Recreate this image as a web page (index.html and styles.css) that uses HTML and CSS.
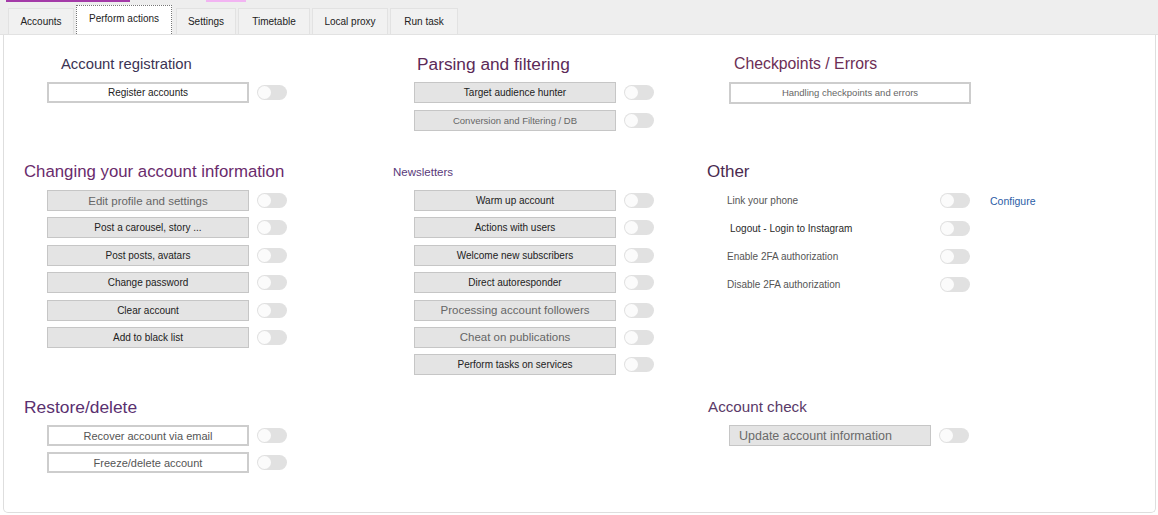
FILE: index.html
```html
<!DOCTYPE html>
<html>
<head>
<meta charset="utf-8">
<link rel="stylesheet" href="styles.css">
</head>
<body>
<div class="app">
  <header class="topbar">
    <div class="marks"><span class="mark mark-a"></span><span class="mark mark-b"></span></div>
    <nav class="tabs">
      <span class="tab t-accounts">Accounts</span>
      <span class="tab active t-perform">Perform actions</span>
      <span class="tab t-settings">Settings</span>
      <span class="tab t-timetable">Timetable</span>
      <span class="tab t-proxy">Local proxy</span>
      <span class="tab t-run">Run task</span>
    </nav>
  </header>
  <main class="panel">
    <section class="sec c1 r1">
      <h2 class="h h-reg">Account registration</h2>
      <div class="list">
        <div class="row"><span class="btn white">Register accounts</span><span class="tog"></span></div>
      </div>
    </section>
    <section class="sec c2 r1">
      <h2 class="h h-pars">Parsing and filtering</h2>
      <div class="list l2">
        <div class="row"><span class="btn">Target audience hunter</span><span class="tog"></span></div>
        <div class="row"><span class="btn soft">Conversion and Filtering / DB</span><span class="tog"></span></div>
      </div>
    </section>
    <section class="sec c3 r1">
      <h2 class="h h-chk">Checkpoints / Errors</h2>
      <div class="list">
        <div class="row"><span class="btn white wide soft">Handling checkpoints and errors</span></div>
      </div>
    </section>

    <section class="sec c1 r2">
      <h2 class="h h-chg">Changing your account information</h2>
      <div class="list">
        <div class="row"><span class="btn grey">Edit profile and settings</span><span class="tog"></span></div>
        <div class="row"><span class="btn">Post a carousel, story ...</span><span class="tog"></span></div>
        <div class="row"><span class="btn">Post posts, avatars</span><span class="tog"></span></div>
        <div class="row"><span class="btn">Change password</span><span class="tog"></span></div>
        <div class="row"><span class="btn">Clear account</span><span class="tog"></span></div>
        <div class="row"><span class="btn">Add to black list</span><span class="tog"></span></div>
      </div>
    </section>
    <section class="sec c2 r2">
      <h2 class="h h-news">Newsletters</h2>
      <div class="list">
        <div class="row"><span class="btn">Warm up account</span><span class="tog"></span></div>
        <div class="row"><span class="btn">Actions with users</span><span class="tog"></span></div>
        <div class="row"><span class="btn">Welcome new subscribers</span><span class="tog"></span></div>
        <div class="row"><span class="btn">Direct autoresponder</span><span class="tog"></span></div>
        <div class="row"><span class="btn grey">Processing account followers</span><span class="tog"></span></div>
        <div class="row"><span class="btn grey">Cheat on publications</span><span class="tog"></span></div>
        <div class="row"><span class="btn">Perform tasks on services</span><span class="tog"></span></div>
      </div>
    </section>
    <section class="sec c3 r2">
      <h2 class="h h-oth">Other</h2>
      <div class="list opts">
        <div class="row"><span class="lbl">Link your phone</span><span class="tog"></span><a class="cfg">Configure</a></div>
        <div class="row"><span class="lbl dark">Logout - Login to Instagram</span><span class="tog"></span></div>
        <div class="row"><span class="lbl">Enable 2FA authorization</span><span class="tog"></span></div>
        <div class="row"><span class="lbl">Disable 2FA authorization</span><span class="tog"></span></div>
      </div>
    </section>

    <section class="sec c1 r3">
      <h2 class="h h-res">Restore/delete</h2>
      <div class="list">
        <div class="row"><span class="btn white grey2">Recover account via email</span><span class="tog"></span></div>
        <div class="row"><span class="btn white grey2">Freeze/delete account</span><span class="tog"></span></div>
      </div>
    </section>
    <section class="sec c2 r3"></section>
    <section class="sec c3 r3">
      <h2 class="h h-acc">Account check</h2>
      <div class="list">
        <div class="row"><span class="btn grey big">Update account information</span><span class="tog"></span></div>
      </div>
    </section>
  </main>
</div>
</body>
</html>
```
FILE: styles.css
```css
* { box-sizing: border-box; }
html, body { margin: 0; padding: 0; }
body {
  background: #ffffff;
  font-family: "Liberation Sans", Arial, sans-serif;
  width: 1158px;
  height: 515px;
  overflow: hidden;
}
.app { display: flex; flex-direction: column; height: 515px; }

.topbar {
  background: #eeeeee;
  height: 35px;
  border-bottom: 1px solid #e2e2e2;
  display: flex;
  flex-direction: column;
}
.marks { display: flex; height: 3px; }
.mark { display: block; height: 2px; }
.mark-a { margin-left: 6px; width: 124px; background: #a43aa8; }
.mark-b { margin-left: 76px; width: 40px; background: #f2b4f2; }

.tabs {
  display: flex;
  align-items: flex-end;
  padding-left: 8px;
  gap: 2px;
  flex: 1;
}
.tab {
  display: flex;
  align-items: center;
  justify-content: center;
  height: 26px;
  font-size: 10px;
  color: #222;
  background: #f1f1f1;
  border: 1px solid #e2e2e2;
  border-bottom: none;
}
.tab.active {
  height: 29px;
  background: #ffffff;
  border: 1px dotted #777;
  border-bottom: none;
  padding-bottom: 4px;
}
.t-accounts { width: 66px; }
.t-perform { width: 96px; margin-right: 2px; }
.t-settings { width: 60px; }
.t-timetable { width: 72px; }
.t-proxy { width: 76px; }
.t-run { width: 68px; }

.panel {
  flex: 1;
  margin: 0 2px 2px 3px;
  border: 1px solid #dedede;
  border-top: none;
  border-radius: 0 0 5px 5px;
  background: #fff;
  display: grid;
  grid-template-columns: 369px 314px 1fr;
  grid-template-rows: 108px 235px 1fr;
  padding: 20px 0 0 20px;
}

.sec { display: flex; flex-direction: column; }
.h {
  margin: 0 0 9px 0;
  height: 18px;
  line-height: 18px;
  font-weight: normal;
  white-space: nowrap;
}
.h-reg { font-size: 14.8px; color: #3b3353; margin-left: 37px; }
.h-pars { font-size: 17.3px; color: #5c2a58; margin-left: 24px; }
.h-chk { font-size: 15.8px; color: #6c2e55; margin-left: 27px; }
.h-chg { font-size: 16.8px; color: #6a2b6c; }
.h-news { font-size: 11.5px; color: #5a3a7a; }
.h-oth { font-size: 17px; color: #4a2a50; }
.h-res { font-size: 17.4px; color: #5a3070; }
.h-acc { font-size: 15.2px; color: #5a3a68; margin-left: 1px; }

.c1 .list { margin-left: 23px; }
.c2 .list { margin-left: 21px; }
.c3 .list { margin-left: 22px; }

.list { display: flex; flex-direction: column; gap: 6.4px; }
.list.l2 { gap: 7px; }
.row { display: flex; align-items: center; height: 21px; }

.btn {
  width: 202px;
  height: 21px;
  display: flex;
  align-items: center;
  justify-content: center;
  background: #e4e4e4;
  border: 1px solid #c6c6c6;
  font-size: 10px;
  color: #222;
  white-space: nowrap;
}
.btn.white { background: #fff; border: 2px solid #cdcdcd; }
.btn.wide { width: 242px; height: 22px; }
.btn.soft { color: #666; font-size: 9.5px; }
.btn.grey { color: #666; font-size: 11.5px; }
.btn.grey2 { color: #555; font-size: 11px; }
.btn.big { font-size: 12.5px; color: #6a6a6a; justify-content: flex-start; padding-left: 9px; }

.tog {
  width: 30px;
  height: 15px;
  margin-left: 8px;
  border-radius: 8px;
  background: #e1e1e1;
  position: relative;
  flex: none;
}
.tog::before {
  content: "";
  position: absolute;
  left: 1px;
  top: 1px;
  width: 13px;
  height: 13px;
  border-radius: 50%;
  background: #fbfbfb;
}

.opts { gap: 7px; margin-left: 20px !important; }
.opts .row { height: 21px; }
.lbl {
  width: 213px;
  font-size: 10px;
  color: #555;
  white-space: nowrap;
}
.lbl.dark { color: #2a2a2a; padding-left: 3px; }
.opts .tog { margin-left: 0; }
.cfg {
  margin-left: 20px;
  font-size: 10.5px;
  color: #2b5da6;
}
```
